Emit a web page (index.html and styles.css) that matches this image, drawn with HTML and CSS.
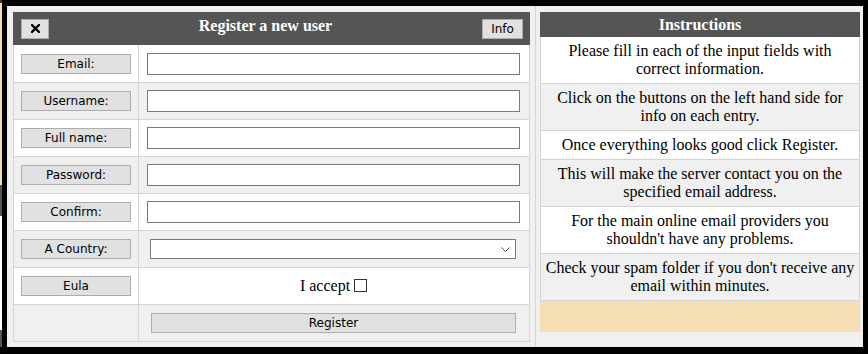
FILE: index.html
```html
<!DOCTYPE html>
<html lang="en">
  <head>
    <meta charset="UTF-8" />
    <meta name="viewport" content="width=device-width, initial-scale=1.0" />
    <title>Register a new user</title>
    <link rel="stylesheet" href="styles.css">
  </head>
  <body>
    <div class="page-peek"></div>
    <div class="modal">
      <section class="register">
        <div class="register-head">
          <button class="btn btn-close" aria-label="Close">
            <svg width="9" height="9" viewBox="0 0 9 9">
              <path d="M1,1 L8,8 M8,1 L1,8" stroke="#000" stroke-width="2.3" stroke-linecap="square" />
            </svg>
          </button>
          <h1>Register a new user</h1>
          <button class="btn btn-info">Info</button>
        </div>
        <table class="register-form">
          <tr>
            <td class="lbl"><button class="btn btn-field">Email:</button></td>
            <td class="fld"><input type="text" /></td>
          </tr>
          <tr>
            <td class="lbl"><button class="btn btn-field">Username:</button></td>
            <td class="fld"><input type="text" /></td>
          </tr>
          <tr>
            <td class="lbl"><button class="btn btn-field">Full name:</button></td>
            <td class="fld"><input type="text" /></td>
          </tr>
          <tr>
            <td class="lbl"><button class="btn btn-field">Password:</button></td>
            <td class="fld"><input type="password" /></td>
          </tr>
          <tr>
            <td class="lbl"><button class="btn btn-field">Confirm:</button></td>
            <td class="fld"><input type="password" /></td>
          </tr>
          <tr>
            <td class="lbl"><button class="btn btn-field">A Country:</button></td>
            <td class="fld fld-select">
              <div class="select-wrap">
                <select><option></option></select>
                <svg class="chevron" width="9" height="5" viewBox="0 0 9 5">
                  <polyline points="0.5,0.5 4.5,4.5 8.5,0.5" fill="none" stroke="#555" stroke-width="1" />
                </svg>
              </div>
            </td>
          </tr>
          <tr>
            <td class="lbl"><button class="btn btn-field">Eula</button></td>
            <td class="fld fld-eula">I accept <input type="checkbox" class="check" /></td>
          </tr>
          <tr>
            <td class="lbl"></td>
            <td class="fld fld-submit"><button class="btn btn-submit">Register</button></td>
          </tr>
        </table>
      </section>

      <aside class="instructions">
        <h2>Instructions</h2>
        <ul>
          <li>Please fill in each of the input fields with correct information.</li>
          <li>Click on the buttons on the left hand side for info on each entry.</li>
          <li>Once everything looks good click Register.</li>
          <li>This will make the server contact you on the specified email address.</li>
          <li>For the main online email providers you shouldn't have any problems.</li>
          <li>Check your spam folder if you don't receive any email within minutes.</li>
          <li class="note"></li>
        </ul>
      </aside>
    </div>
  </body>
</html>
```

FILE: styles.css
```css
body {
  margin: 0;
  height: 354px;
  overflow: hidden;
  display: flex;
  background: #000;
  font-family: 'Liberation Serif', serif;
}

/* sliver of the page behind the overlay */
.page-peek {
  flex: none;
  width: 2px;
  background: linear-gradient(
    #3a3a3a 0 3px,
    #f5deb3 3px 185px,
    #555 185px 216px,
    #fff 216px 330px,
    #555 330px 347px,
    #000 347px
  );
}

.modal {
  display: flex;
  width: 856px;
  height: 341px;
  margin: 6px 5px 7px 5px;
  background: #f0f0f0;
}

.register {
  width: 517px;
  padding: 6px 5px 0 6px;
  border-right: 1px solid #d4d4d4;
}

.register-head {
  display: flex;
  align-items: center;
  height: 33px;
  padding: 0 7px 0 8px;
  background: #555;
}

.register-head h1 {
  flex: 1;
  margin: 0 0 6px;
  text-align: center;
  font: bold 16px 'Liberation Serif', serif;
  color: #fff;
}

.btn {
  height: 20px;
  padding: 0;
  background: #e1e1e1;
  border: 1px solid #adadad;
  font: 12px 'DejaVu Sans', sans-serif;
  color: #000;
}

.btn-close {
  display: flex;
  align-items: center;
  justify-content: center;
  width: 28px;
}

.btn-info {
  width: 41px;
}

.btn-field {
  width: 110px;
}

.btn-submit {
  display: block;
  width: 100%;
  height: 20px;
}

.register-form {
  width: 517px;
  border-collapse: collapse;
}

.register-form td {
  height: 36px;
  padding: 0;
  border: 1px solid #d4d4d4;
}

.register-form tr:first-child td {
  height: 37px;
  border-top: 0;
}

.register-form tr:nth-child(odd) {
  background: #fff;
}

.register-form tr:nth-child(even) {
  background: #f0f0f0;
}

.register-form .lbl {
  width: 124px;
  text-align: center;
}

.fld {
  padding: 0 9px 0 8px !important;
}

.fld input[type='text'],
.fld input[type='password'] {
  display: block;
  box-sizing: border-box;
  width: 100%;
  height: 22px;
  margin: 0;
  padding: 0 3px;
  border: 1px solid #7a7a7a;
  background: #fff;
}

.fld-select {
  padding: 0 13px 0 11px !important;
}

.select-wrap {
  position: relative;
}

.select-wrap select {
  appearance: none;
  display: block;
  width: 100%;
  height: 20px;
  margin: 0;
  border: 1px solid #7a7a7a;
  border-radius: 0;
  background: #fff;
  font: 12px 'DejaVu Sans', sans-serif;
}

.chevron {
  position: absolute;
  right: 6px;
  top: 8px;
}

.fld-eula {
  text-align: center;
  font-size: 16px;
  color: #000;
}

.check {
  appearance: none;
  width: 13px;
  height: 13px;
  margin: 0;
  vertical-align: -1px;
  border: 1px solid #333;
  background: #fff;
}

.fld-submit {
  padding: 0 13px 0 12px !important;
}

.instructions {
  width: 320px;
  padding: 6px 3px 0 4px;
}

.instructions h2 {
  margin: 0;
  height: 25px;
  background: #555;
  text-align: center;
  font: bold 16px/25px 'Liberation Serif', serif;
  color: #fff;
}

.instructions ul {
  list-style: none;
  margin: 0;
  padding: 0;
}

.instructions li {
  padding: 5px 4px;
  border: 1px solid #d4d4d4;
  border-top: 0;
  text-align: center;
  font-size: 16px;
  line-height: 18px;
  color: #000;
}

.instructions li:nth-child(odd) {
  background: #fff;
}

.instructions li:nth-child(even) {
  background: #f0f0f0;
}

.instructions li.note {
  height: 31px;
  padding: 0;
  border: 0;
  background: #f5deb3;
}
```
